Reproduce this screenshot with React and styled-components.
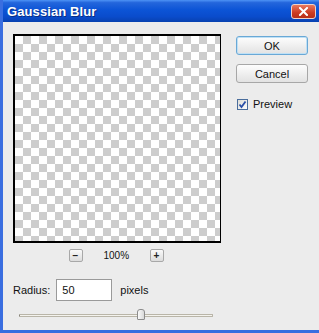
import React from 'react';
import styled, { createGlobalStyle } from 'styled-components';

const GlobalStyle = createGlobalStyle`
  html, body {
    margin: 0;
    padding: 0;
    background: #ececec;
  }
  body {
    font-family: "Liberation Sans", Arial, sans-serif;
  }
`;

const App = () => {
  return (
    <Window>
      <GlobalStyle />
      <TitleBar>
        <Title>Gaussian Blur</Title>
        <CloseButton>
          <svg width="9" height="9" viewBox="0 0 9 9">
            <path d="M1 1 L8 8 M8 1 L1 8" stroke="#fff" strokeWidth="2" strokeLinecap="square" />
          </svg>
        </CloseButton>
      </TitleBar>
      <Body>
        <LeftColumn>
          <PreviewCanvas />
          <ZoomRow>
            <ZoomButton>&minus;</ZoomButton>
            <ZoomLabel>100%</ZoomLabel>
            <ZoomButton>+</ZoomButton>
          </ZoomRow>
          <RadiusRow>
            <Label>Radius:</Label>
            <NumberInput defaultValue="50" />
            <Label>pixels</Label>
          </RadiusRow>
          <Slider>
            <Track />
            <Thumb style={{ left: `${(52 / 83) * 100}%` }} />
          </Slider>
        </LeftColumn>
        <RightColumn>
          <DialogButton $primary>OK</DialogButton>
          <DialogButton>Cancel</DialogButton>
          <CheckRow>
            <CheckBox>
              <svg width="9" height="9" viewBox="0 0 9 9">
                <path d="M1.5 4.5 L3.5 7 L7.5 1.5" stroke="#2a4fa8" strokeWidth="1.8" fill="none" />
              </svg>
            </CheckBox>
            <Label>Preview</Label>
          </CheckRow>
        </RightColumn>
      </Body>
    </Window>
  );
};

const Window = styled.div`
  width: 319px;
  height: 333px;
  box-sizing: border-box;
  display: flex;
  flex-direction: column;
  background: #ececec;
  border-left: 3px solid #3a6ee0;
  border-bottom: 3px solid #3a6ee0;
  overflow: hidden;
`;

const TitleBar = styled.div`
  height: 22px;
  margin-left: -3px;
  padding: 0 3px 0 7px;
  display: flex;
  align-items: center;
  justify-content: space-between;
  background: linear-gradient(#4d93f5 0%, #2466dc 12%, #0c54d6 45%, #0a4ccc 75%, #0841b0 100%);
`;

const Title = styled.span`
  color: #fff;
  font-size: 13px;
  font-weight: bold;
  letter-spacing: 0.1px;
  text-shadow: 1px 1px 0 #0a2f86;
`;

const CloseButton = styled.div`
  width: 25px;
  height: 15px;
  box-sizing: border-box;
  border: 1px solid #f0d2c8;
  border-radius: 3px;
  background: linear-gradient(#e8785e, #cc3b22 60%, #b83018);
  display: flex;
  align-items: center;
  justify-content: center;
`;

const Body = styled.div`
  flex: 1;
  display: flex;
  padding: 12px 0 0 10px;
`;

const LeftColumn = styled.div`
  width: 208px;
  display: flex;
  flex-direction: column;
`;

const PreviewCanvas = styled.div`
  width: 208px;
  height: 209px;
  box-sizing: border-box;
  border: 1px solid #000;
  border-width: 2px 1px 2px 2px;
  background-color: #fff;
  background-image:
    linear-gradient(45deg, #cdcdcd 25%, transparent 25%, transparent 75%, #cdcdcd 75%),
    linear-gradient(45deg, #cdcdcd 25%, transparent 25%, transparent 75%, #cdcdcd 75%);
  background-size: 16px 16px;
  background-position: 0 0, 8px 8px;
`;

const ZoomRow = styled.div`
  margin-top: 6px;
  display: flex;
  justify-content: center;
  align-items: center;
  gap: 21px;
  padding-right: 2px;
`;

const ZoomButton = styled.div`
  width: 14px;
  height: 13px;
  box-sizing: border-box;
  border: 1px solid #a8a8a8;
  border-radius: 2px;
  background: linear-gradient(#fafafa, #dcdcdc);
  font-size: 10px;
  font-weight: bold;
  color: #222;
  display: flex;
  align-items: center;
  justify-content: center;
  line-height: 1;
`;

const ZoomLabel = styled.span`
  width: 25px;
  font-size: 10px;
  color: #111;
  text-align: center;
`;

const RadiusRow = styled.div`
  margin-top: 17px;
  display: flex;
  align-items: center;
  gap: 6px;
`;

const Label = styled.span`
  font-size: 11px;
  color: #111;
`;

const NumberInput = styled.input`
  width: 56px;
  height: 22px;
  box-sizing: border-box;
  margin: 0 2px 0 0;
  padding: 0 5px;
  border: 1px solid #9a9a9a;
  background: #fff;
  font-family: "Liberation Sans", Arial, sans-serif;
  font-size: 11px;
  color: #111;
  outline: none;
`;

const Slider = styled.div`
  position: relative;
  margin: 8px 0 0 6px;
  width: 194px;
  height: 12px;
  display: flex;
  align-items: center;
`;

const Track = styled.div`
  width: 100%;
  height: 3px;
  box-sizing: border-box;
  border: 1px solid #b9b5a8;
  border-left-color: #8a877e;
  background: #f4f3ee;
  border-radius: 1px;
`;

const Thumb = styled.div`
  position: absolute;
  top: 0;
  width: 8px;
  height: 11px;
  box-sizing: border-box;
  margin-left: -4px;
  border: 1px solid #8c8c8c;
  border-radius: 3px 3px 1px 1px;
  background: linear-gradient(90deg, #fafafa, #d9d9d9);
`;

const RightColumn = styled.div`
  margin-left: 15px;
  padding-top: 2px;
  display: flex;
  flex-direction: column;
  gap: 9px;
`;

const DialogButton = styled.div`
  width: 72px;
  height: 19px;
  box-sizing: border-box;
  border: 1px solid ${props => (props.$primary ? '#69a8d6' : '#a7a7a7')};
  box-shadow: ${props => (props.$primary ? 'inset 0 0 0 1px #bfe0f5' : 'none')};
  border-radius: 3px;
  background: linear-gradient(#fdfdfd, #e2e2e2);
  font-size: 11px;
  color: #111;
  display: flex;
  align-items: center;
  justify-content: center;
`;

const CheckRow = styled.div`
  margin-top: 6px;
  display: flex;
  align-items: center;
  gap: 5px;
  padding-left: 1px;
`;

const CheckBox = styled.div`
  width: 11px;
  height: 11px;
  box-sizing: border-box;
  border: 1px solid #4a6d9c;
  background: linear-gradient(135deg, #dcdcd6, #fdfdfd);
  display: flex;
  align-items: center;
  justify-content: center;
`;

export default App;
